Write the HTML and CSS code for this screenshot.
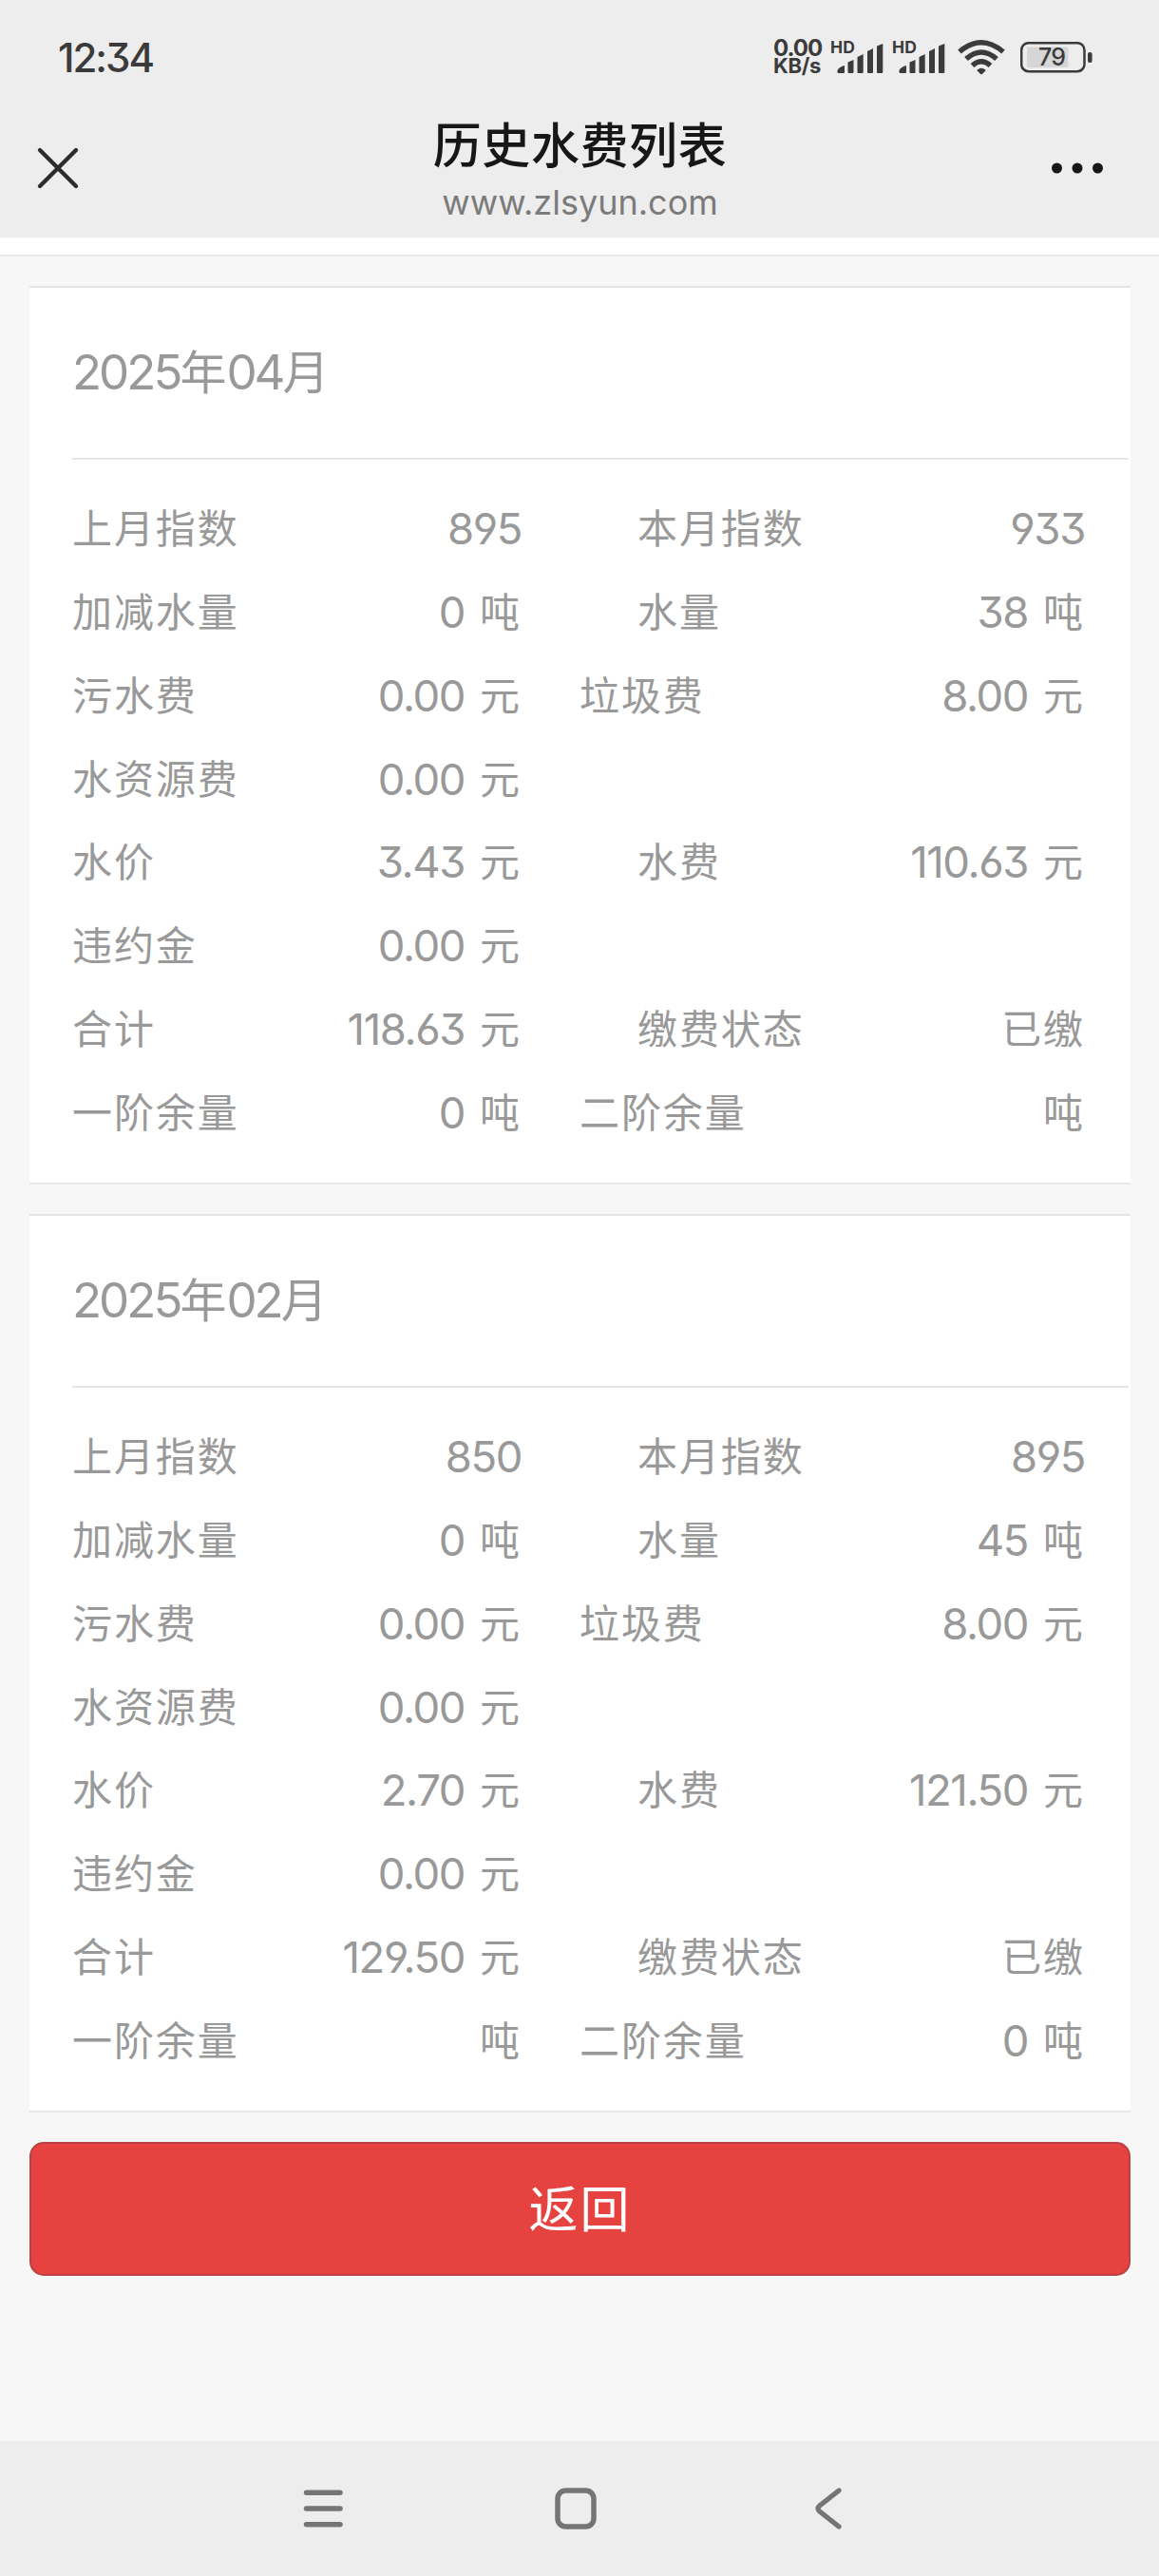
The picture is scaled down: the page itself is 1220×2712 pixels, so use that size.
FILE: index.html
```html
<!DOCTYPE html>
<html lang="zh-CN">
<head>
<meta charset="utf-8">
<title>历史水费列表</title>
<link rel="stylesheet" href="styles.css">
</head>
<body>
<div class="screen">
  <header class="top">
    <div class="status">
      <span class="clock">12:34</span>
      <div class="status-icons">
        <div class="speed"><span class="speed-num">0.00</span><span class="speed-unit">KB/s</span></div>
        <svg class="signal" width="56" height="40" viewBox="0 0 56 40">
          <text class="hd" x="-1" y="14.500" textLength="26">HD</text>
          <g fill="#3b3b3b"><path d="M6.500 35V33.500Q7 30 14 28V35Q14 36 13 36H7.500Q6.500 36 6.500 35Z"/><path d="M17.500 35V24.500L23.500 22V35Q23.500 36 22.500 36H18.500Q17.500 36 17.500 35Z"/><path d="M27.500 35V19L33.700 16V35Q33.700 36 32.700 36H28.500Q27.500 36 27.500 35Z"/><path d="M38 35V13L44 10V35Q44 36 43 36H39Q38 36 38 35Z"/><path d="M48 35V7.500L54.300 5V35Q54.300 36 53.300 36H49Q48 36 48 35Z"/></g>
        </svg>
        <svg class="signal second" width="56" height="40" viewBox="0 0 56 40">
          <text class="hd" x="-1" y="14.500" textLength="26">HD</text>
          <g fill="#3b3b3b"><path d="M6.500 35V33.500Q7 30 14 28V35Q14 36 13 36H7.500Q6.500 36 6.500 35Z"/><path d="M17.500 35V24.500L23.500 22V35Q23.500 36 22.500 36H18.500Q17.500 36 17.500 35Z"/><path d="M27.500 35V19L33.700 16V35Q33.700 36 32.700 36H28.500Q27.500 36 27.500 35Z"/><path d="M38 35V13L44 10V35Q44 36 43 36H39Q38 36 38 35Z"/><path d="M48 35V7.500L54.300 5V35Q54.300 36 53.300 36H49Q48 36 48 35Z"/></g>
        </svg>
        <svg class="wifi" width="50" height="38" viewBox="0 0 50 38" fill="none" stroke="#3b3b3b" stroke-width="5.500">
          <path d="M2 13.500Q25 -6 48 13.500"/><path d="M9 21Q25 7 41 21"/><path d="M15.500 28Q25 19.500 34.500 28"/>
          <path d="M20.200 33Q25 28.500 29.800 33L25.900 37Q25 37.700 24.100 37Z" fill="#3b3b3b" stroke="none"/>
        </svg>
        <svg class="battery" width="76" height="33" viewBox="0 0 76 33">
          <rect x="7" y="5.500" width="43.500" height="21.500" rx="2" fill="#d6d6d6"/>
          <rect x="1.200" y="1.200" width="66.300" height="30" rx="7.500" fill="none" stroke="#3b3b3b" stroke-width="2.500"/>
          <rect x="71" y="11" width="4.600" height="11" rx="2" fill="#3b3b3b"/>
          <text class="level" x="19" y="25.300" textLength="29">79</text>
        </svg>
      </div>
    </div>
    <div class="nav">
      <svg class="close" width="46" height="46" viewBox="0 0 46 46" stroke="#2b2b2b" stroke-width="4.300" stroke-linecap="round"><path d="M4 4L42 42M42 4L4 42"/></svg>
      <div class="heading"><h1>历史水费列表</h1><p>www.zlsyun.com</p></div>
      <svg class="more" width="58" height="14" viewBox="0 0 58 14" fill="#171717"><circle cx="7.500" cy="7" r="5.500"/><circle cx="29" cy="7" r="5.500"/><circle cx="50.500" cy="7" r="5.500"/></svg>
    </div>
  </header>
  <div class="strip"></div>
  <main>
    <section class="card">
      <h2><span class="n">2025</span>年<span class="n">04</span>月</h2>
      <div class="rows">
        <div class="row"><div class="cell"><span>上月指数</span><span class="v"><b>895</b></span></div><div class="cell in"><span>本月指数</span><span class="v"><b>933</b></span></div></div>
        <div class="row"><div class="cell"><span>加减水量</span><span class="v"><b>0</b>吨</span></div><div class="cell in"><span>水量</span><span class="v"><b>38</b>吨</span></div></div>
        <div class="row"><div class="cell"><span>污水费</span><span class="v"><b>0.00</b>元</span></div><div class="cell"><span>垃圾费</span><span class="v"><b>8.00</b>元</span></div></div>
        <div class="row"><div class="cell"><span>水资源费</span><span class="v"><b>0.00</b>元</span></div></div>
        <div class="row"><div class="cell"><span>水价</span><span class="v"><b>3.43</b>元</span></div><div class="cell in"><span>水费</span><span class="v"><b>110.63</b>元</span></div></div>
        <div class="row"><div class="cell"><span>违约金</span><span class="v"><b>0.00</b>元</span></div></div>
        <div class="row"><div class="cell"><span>合计</span><span class="v"><b>118.63</b>元</span></div><div class="cell in"><span>缴费状态</span><span class="v">已缴</span></div></div>
        <div class="row"><div class="cell"><span>一阶余量</span><span class="v"><b>0</b>吨</span></div><div class="cell"><span>二阶余量</span><span class="v">吨</span></div></div>
      </div>
    </section>
    <section class="card">
      <h2><span class="n">2025</span>年<span class="n">02</span>月</h2>
      <div class="rows">
        <div class="row"><div class="cell"><span>上月指数</span><span class="v"><b>850</b></span></div><div class="cell in"><span>本月指数</span><span class="v"><b>895</b></span></div></div>
        <div class="row"><div class="cell"><span>加减水量</span><span class="v"><b>0</b>吨</span></div><div class="cell in"><span>水量</span><span class="v"><b>45</b>吨</span></div></div>
        <div class="row"><div class="cell"><span>污水费</span><span class="v"><b>0.00</b>元</span></div><div class="cell"><span>垃圾费</span><span class="v"><b>8.00</b>元</span></div></div>
        <div class="row"><div class="cell"><span>水资源费</span><span class="v"><b>0.00</b>元</span></div></div>
        <div class="row"><div class="cell"><span>水价</span><span class="v"><b>2.70</b>元</span></div><div class="cell in"><span>水费</span><span class="v"><b>121.50</b>元</span></div></div>
        <div class="row"><div class="cell"><span>违约金</span><span class="v"><b>0.00</b>元</span></div></div>
        <div class="row"><div class="cell"><span>合计</span><span class="v"><b>129.50</b>元</span></div><div class="cell in"><span>缴费状态</span><span class="v">已缴</span></div></div>
        <div class="row"><div class="cell"><span>一阶余量</span><span class="v">吨</span></div><div class="cell"><span>二阶余量</span><span class="v"><b>0</b>吨</span></div></div>
      </div>
    </section>
    <button class="back-button" type="button">返回</button>
  </main>
  <footer class="system-nav">
    <svg width="46" height="46" viewBox="0 0 46 46" fill="none" stroke="#757575" stroke-width="5.500" stroke-linecap="round"><path d="M5.500 6.200H41M5.500 23H41M5.500 39.800H41"/></svg>
    <svg width="46" height="46" viewBox="0 0 46 46" fill="none" stroke="#757575" stroke-width="5.500"><rect x="4" y="4" width="38" height="38" rx="8.500"/></svg>
    <svg width="46" height="46" viewBox="0 0 46 46" fill="none" stroke="#757575" stroke-width="5.300" stroke-linecap="round"><path d="M34 4L13.500 20.200Q10.500 23 13.500 25.800L34 42"/></svg>
  </footer>
</div>
</body>
</html>
```
FILE: styles.css
```css
* { box-sizing: border-box; }
body {
  margin: 0;
  background: #f7f7f7;
  font-family: "Noto Sans CJK SC", sans-serif;
}
svg { display: block; flex: none; }
h1, h2, p { margin: 0; font-weight: 400; }
.screen {
  width: 1220px;
  height: 2712px;
  display: flex;
  flex-direction: column;
  overflow: hidden;
}

/* Status bar and title bar */
.top { height: 250px; background: #ededed; flex: none; }
.status {
  height: 120px;
  padding: 0 70px 0 61px;
  display: flex;
  justify-content: space-between;
  align-items: center;
  color: #3b3b3b;
  font-family: Inter, sans-serif;
}
.clock {
  font-size: 42px;
  font-weight: 500;
  letter-spacing: -2px;
  font-feature-settings: "cv09";
}
.status-icons { display: flex; align-items: center; }
.speed {
  width: 61px;
  display: flex;
  flex-direction: column;
  font-weight: 700;
  line-height: 18px;
}
.speed-num { font-size: 24px; letter-spacing: -1px; }
.speed-unit { font-size: 22px; letter-spacing: -.3px; }
.hd { font: 700 17.500px Inter, sans-serif; fill: #3b3b3b; }
.signal { margin-top: 1px; overflow: visible; }
.second { margin-left: 9px; }
.wifi { margin-left: 12px; }
.battery { margin-left: 16px; }
.level { font: 500 25px Inter, sans-serif; fill: #3b3b3b; }
.nav {
  height: 130px;
  padding: 0 57px 0 38px;
  display: grid;
  grid-template-columns: 58px 1fr 58px;
  align-items: start;
}
.close { margin-top: 34px; }
.more { margin-top: 50px; }
.heading { text-align: center; padding-left: 20px; }
.heading h1 {
  font-size: 51px;
  font-weight: 500;
  line-height: 60px;
  color: #171717;
  letter-spacing: .6px;
}
.heading p {
  font-family: Inter, sans-serif;
  font-size: 36px;
  line-height: 44px;
  margin-top: 11px;
  color: #7b7b7b;
}
.strip {
  height: 20px;
  flex: none;
  background: #fff;
  border-bottom: 2px solid #e9e9e9;
}

/* Bill cards */
main { flex: 1; padding: 31px 30px 0 31px; }
.card {
  height: 946px;
  margin-bottom: 31px;
  padding: 0 2px 0 45px;
  background: #fff;
  border-top: 2px solid #e4e4e4;
  border-bottom: 2px solid #e7e7e7;
  color: #999;
}
.card h2 {
  height: 181px;
  border-bottom: 2px solid #e6e6e6;
  font-size: 49px;
  line-height: 172px;
}
.n, .v b {
  font-family: Inter, sans-serif;
  font-weight: 400;
  font-feature-settings: "cv03", "cv04", "cv09";
}
.n { font-size: 51px; letter-spacing: -3px; }
.rows { padding-top: 26px; }
.row {
  height: 87.850px;
  display: grid;
  grid-template-columns: 473px 532px;
  column-gap: 61px;
  font-size: 42px;
  line-height: 88px;
  letter-spacing: 1.900px;
}
.cell { display: flex; justify-content: space-between; }
.in { padding-left: 61px; }
.v { display: flex; gap: 16px; }
.v b {
  padding-top: 3px;
  font-size: 45.500px;
  letter-spacing: -1.400px;
}
.v b:only-child:last-child { margin-right: 0; }
.back-button {
  display: block;
  width: 100%;
  height: 141px;
  padding: 0 0 7px;
  border: 2px solid #b84143;
  border-radius: 15px;
  background: #e64340;
  color: #fff;
  font-family: "Noto Sans CJK SC", sans-serif;
  font-size: 52px;
  letter-spacing: 2px;
}

/* System navigation */
.system-nav {
  height: 142px;
  flex: none;
  background: #ededed;
  padding-left: 317px;
  display: flex;
  align-items: center;
  gap: 220px;
}
```
